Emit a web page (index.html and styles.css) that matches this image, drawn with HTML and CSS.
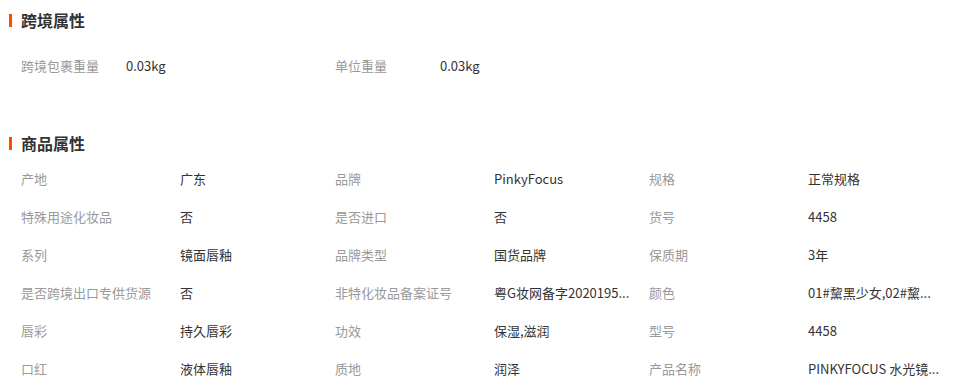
FILE: index.html
```html
<!DOCTYPE html>
<html lang="zh-CN">
<head>
<meta charset="utf-8">
<title>属性</title>
<link rel="stylesheet" href="styles.css">
</head>
<body>
<div class="page">
  <section class="section section-cross">
    <h2 class="title"><span class="bar"></span>跨境属性</h2>
    <div class="grid">
      <div class="cell"><span class="label">跨境包裹重量</span><span class="value">0.03kg</span></div>
      <div class="cell"><span class="label">单位重量</span><span class="value">0.03kg</span></div>
    </div>
  </section>
  <section class="section section-goods">
    <h2 class="title"><span class="bar"></span>商品属性</h2>
    <div class="grid">
      <div class="cell"><span class="label">产地</span><span class="value">广东</span></div>
      <div class="cell"><span class="label">品牌</span><span class="value">PinkyFocus</span></div>
      <div class="cell"><span class="label">规格</span><span class="value">正常规格</span></div>
      <div class="cell"><span class="label">特殊用途化妆品</span><span class="value">否</span></div>
      <div class="cell"><span class="label">是否进口</span><span class="value">否</span></div>
      <div class="cell"><span class="label">货号</span><span class="value">4458</span></div>
      <div class="cell"><span class="label">系列</span><span class="value">镜面唇釉</span></div>
      <div class="cell"><span class="label">品牌类型</span><span class="value">国货品牌</span></div>
      <div class="cell"><span class="label">保质期</span><span class="value">3年</span></div>
      <div class="cell"><span class="label">是否跨境出口专供货源</span><span class="value">否</span></div>
      <div class="cell"><span class="label">非特化妆品备案证号</span><span class="value">粤G妆网备字2020195...</span></div>
      <div class="cell"><span class="label">颜色</span><span class="value">01#黧黑少女,02#黧...</span></div>
      <div class="cell"><span class="label">唇彩</span><span class="value">持久唇彩</span></div>
      <div class="cell"><span class="label">功效</span><span class="value">保湿,滋润</span></div>
      <div class="cell"><span class="label">型号</span><span class="value">4458</span></div>
      <div class="cell"><span class="label">口红</span><span class="value">液体唇釉</span></div>
      <div class="cell"><span class="label">质地</span><span class="value">润泽</span></div>
      <div class="cell"><span class="label">产品名称</span><span class="value">PINKYFOCUS 水光镜...</span></div>
    </div>
  </section>
</div>
</body>
</html>
```
FILE: styles.css
```css
html, body {
  margin: 0;
  padding: 0;
  background: #ffffff;
}
body {
  font-family: "Noto Sans CJK SC", "Microsoft YaHei", "Noto Sans", sans-serif;
  font-size: 13px;
  color: #333333;
}
.page {
  width: 957px;
  overflow: hidden;
}
.section-cross {
  padding-top: 10px;
}
.section-goods {
  padding-top: 48px;
}
.title {
  display: flex;
  align-items: center;
  gap: 9px;
  margin: 0;
  padding-left: 9px;
  height: 20px;
  font-size: 16px;
  font-weight: bold;
  color: #333333;
  line-height: 20px;
}
.bar {
  width: 3px;
  height: 13px;
  background: #ff4a00;
}
.grid {
  display: grid;
  grid-template-columns: repeat(3, 314px);
  padding-left: 21px;
}
.section-cross .grid {
  margin-top: 17px;
}
.section-goods .grid {
  margin-top: 7px;
}
.cell {
  display: flex;
  height: 38px;
  line-height: 38px;
  white-space: nowrap;
}
.label {
  width: 159px;
  flex: none;
  color: #999999;
}
.section-cross .label {
  width: 105px;
}
.value {
  flex: none;
  color: #333333;
}
```
